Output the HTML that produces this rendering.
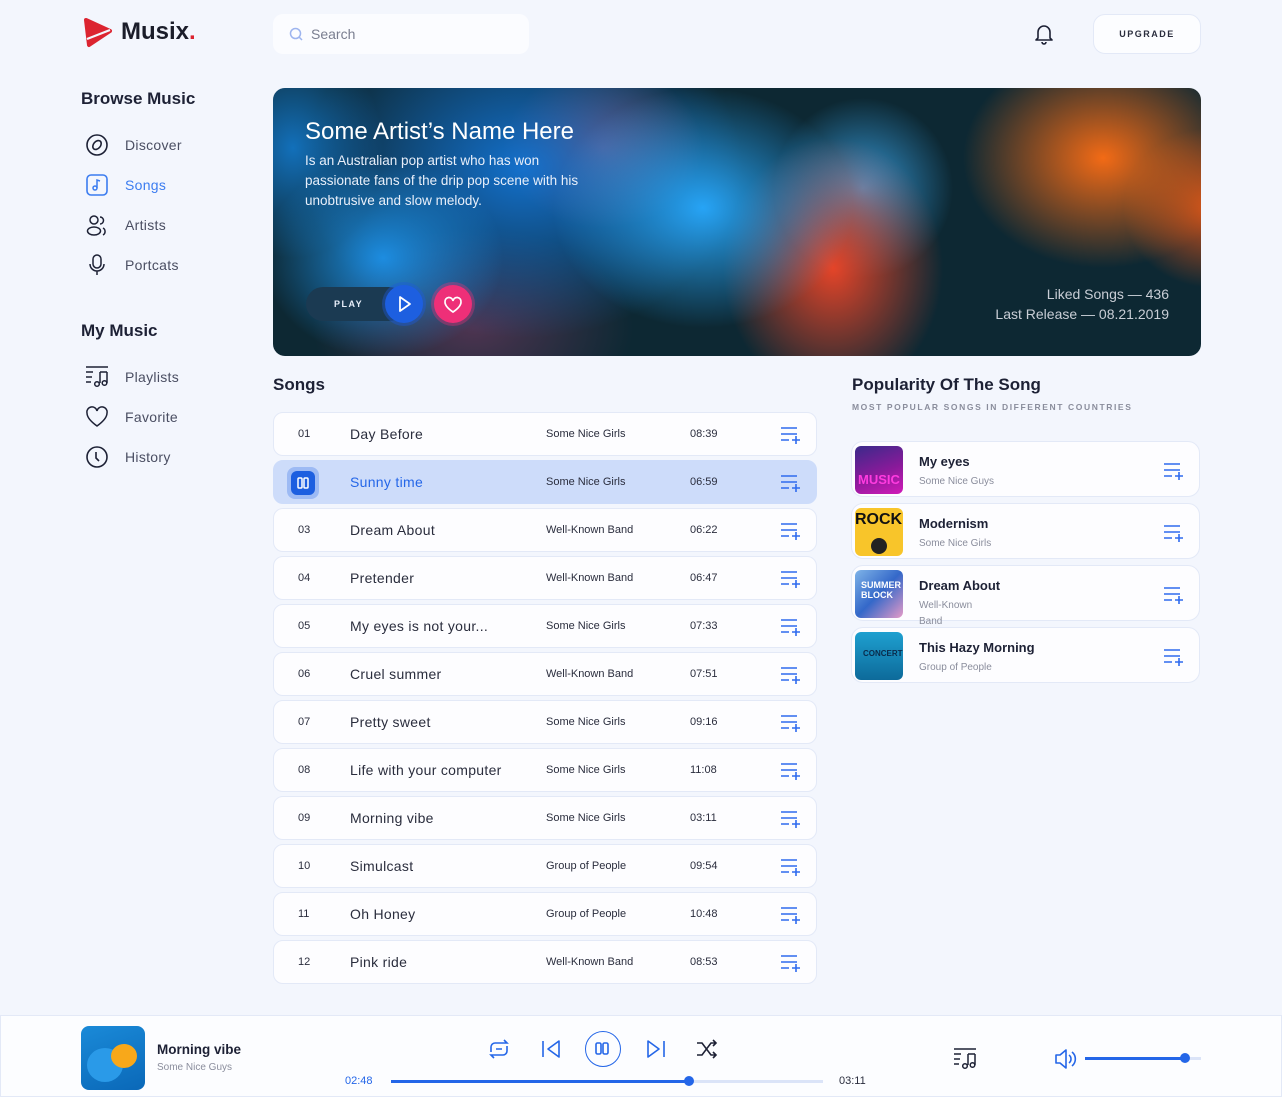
<!DOCTYPE html>
<html><head><meta charset="utf-8"><style>
*{margin:0;padding:0;box-sizing:border-box}
body{width:1282px;height:1097px;background:#f3f6fd;font-family:"Liberation Sans",sans-serif;color:#1d2135;position:relative;overflow:hidden}
.a{position:absolute}
.nav{position:absolute;left:86px;display:flex;align-items:center;font-size:14px;color:#4a4e62;letter-spacing:.3px}
.nav svg{width:22px;height:22px;margin-right:17px}
.row{position:absolute;left:273px;width:544px;height:44px;background:#fdfdff;border:1px solid #e3e9f7;border-radius:10px;font-size:11px;color:#2a2d3d}
.row span{position:absolute;top:15px}
.row .n{left:24px}
.row .t{left:76px;font-size:14px;top:13px;letter-spacing:.3px}
.row .b{left:272px}
.row .d{left:416px}
.row .ad{position:absolute;left:506px;top:12px}
.card{position:absolute;left:851px;width:349px;height:56px;background:#fdfdff;border:1px solid #e3e9f7;border-radius:12px}
.card .im{position:absolute;left:3px;top:4px;width:48px;height:48px;border-radius:6px;overflow:hidden}
.card b{position:absolute;left:67px;top:12px;font-size:13px}
.card i{position:absolute;left:67px;top:32px;font-style:normal;font-size:10px;color:#8a8d9c;line-height:16px}
.card svg{position:absolute;left:311px;top:19px}
</style></head><body>
<svg class="a" style="left:82px;top:16px" width="32" height="32" viewBox="0 0 32 32"><path d="M4 4 L28 15 L7 29 Z" fill="#dc2430" stroke="#dc2430" stroke-width="4" stroke-linejoin="round"/><path d="M5 23 L28 14" stroke="#f3f6fd" stroke-width="2.2"/></svg>
<div class="a" style="left:121px;top:18px;font-size:24px;font-weight:bold;color:#1b1d2a">Musix<span style="color:#dc2430">.</span></div>
<div class="a" style="left:273px;top:14px;width:256px;height:40px;background:#fbfcff;border-radius:10px"></div>
<svg class="a" style="left:289px;top:27px" width="14" height="14"><circle cx="6.5" cy="6.5" r="5" fill="none" stroke="#9db4ef" stroke-width="1.5"/><path d="M10 10l3 3" stroke="#9db4ef" stroke-width="1.5"/></svg>
<div class="a" style="left:311px;top:26px;font-size:14px;color:#7a7e90">Search</div>
<svg class="a" style="left:1034px;top:23px" width="20" height="22" viewBox="0 0 20 22"><path d="M4 15V9a6 6 0 0 1 12 0v6l2 2H2z M8 19a2 2 0 0 0 4 0" fill="none" stroke="#1d2135" stroke-width="1.6" stroke-linejoin="round"/></svg>
<div class="a" style="left:1093px;top:14px;width:108px;height:40px;background:#fcfdff;border:1px solid #e3e9f7;border-radius:12px;font-size:9px;font-weight:bold;letter-spacing:1.5px;text-align:center;line-height:38px;color:#2a2d3d">UPGRADE</div>

<div class="a" style="left:81px;top:89px;font-size:17px;font-weight:bold">Browse Music</div>
<div class="nav" style="top:134px"><svg viewBox="0 0 22 22"><circle cx="11" cy="11" r="10" fill="none" stroke="#1d2135" stroke-width="1.6"/><ellipse cx="11" cy="11" rx="3.5" ry="5" transform="rotate(40 11 11)" fill="none" stroke="#1d2135" stroke-width="1.6"/></svg>Discover</div>
<div class="nav" style="top:174px;color:#3b7cf0"><svg viewBox="0 0 22 22"><rect x="1" y="1" width="20" height="20" rx="4" fill="none" stroke="#3b7cf0" stroke-width="1.6"/><circle cx="9" cy="14" r="2" fill="none" stroke="#3b7cf0" stroke-width="1.5"/><path d="M11 14V6l3 1" fill="none" stroke="#3b7cf0" stroke-width="1.5"/></svg>Songs</div>
<div class="nav" style="top:214px"><svg viewBox="0 0 22 22"><circle cx="8" cy="6" r="4" fill="none" stroke="#1d2135" stroke-width="1.5"/><ellipse cx="8" cy="17" rx="6.5" ry="4" fill="none" stroke="#1d2135" stroke-width="1.5"/><path d="M14 3a3.5 3.5 0 0 1 0 7M17 14a4 4 0 0 1 0 7" fill="none" stroke="#1d2135" stroke-width="1.5"/></svg>Artists</div>
<div class="nav" style="top:254px"><svg viewBox="0 0 22 22"><rect x="7" y="1" width="8" height="13" rx="4" fill="none" stroke="#1d2135" stroke-width="1.5"/><path d="M4 10a7 7 0 0 0 14 0M11 17v4" fill="none" stroke="#1d2135" stroke-width="1.5"/></svg>Portcats</div>
<div class="a" style="left:81px;top:321px;font-size:17px;font-weight:bold">My Music</div>
<div class="nav" style="top:366px"><svg viewBox="0 0 22 22"><path d="M0 1h22M0 6h7M0 11h6M0 16h5M14 6h7M14 6v11M21 6v11" fill="none" stroke="#1d2135" stroke-width="1.5"/><circle cx="11" cy="18" r="2.3" fill="none" stroke="#1d2135" stroke-width="1.5"/><circle cx="18.5" cy="17" r="2.3" fill="none" stroke="#1d2135" stroke-width="1.5"/></svg>Playlists</div>
<div class="nav" style="top:406px"><svg viewBox="0 0 22 22"><path d="M11 20C4 15 1 11 1 7a5 5 0 0 1 10-2a5 5 0 0 1 10 2c0 4-3 8-10 13z" fill="none" stroke="#1d2135" stroke-width="1.5"/></svg>Favorite</div>
<div class="nav" style="top:446px"><svg viewBox="0 0 22 22"><circle cx="11" cy="11" r="10" fill="none" stroke="#1d2135" stroke-width="1.6"/><path d="M10 6v6l3 3" fill="none" stroke="#1d2135" stroke-width="1.6"/></svg>History</div>

<div class="a" style="left:273px;top:88px;width:928px;height:268px;border-radius:12px;overflow:hidden;background:#0d2833">
<div class="a" style="left:0;top:0;width:928px;height:268px;background:
radial-gradient(ellipse 150px 120px at 430px 120px,rgba(40,170,255,.95),transparent),
radial-gradient(ellipse 120px 100px at 110px 170px,rgba(30,150,240,.9),transparent),
radial-gradient(ellipse 110px 130px at 560px 180px,rgba(240,70,40,.95),transparent),
radial-gradient(ellipse 90px 90px at 590px 100px,rgba(60,170,240,.85),transparent),
radial-gradient(ellipse 140px 110px at 830px 70px,rgba(255,110,20,.95),transparent),
radial-gradient(ellipse 90px 80px at 940px 120px,rgba(250,90,20,.85),transparent),
radial-gradient(ellipse 220px 170px at 250px 80px,rgba(20,120,220,.9),transparent),
radial-gradient(ellipse 100px 80px at 330px 60px,rgba(230,80,90,.6),transparent),
radial-gradient(ellipse 90px 110px at 20px 60px,rgba(20,130,220,.8),transparent),
radial-gradient(ellipse 160px 100px at 200px 240px,rgba(120,60,100,.6),transparent)"></div>
<div class="a" style="left:32px;top:30px;font-size:24px;color:#fff">Some Artist’s Name Here</div>
<div class="a" style="left:32px;top:63px;font-size:13.5px;color:#e8effa;line-height:20px;width:275px">Is an Australian pop artist who has won passionate fans of the drip pop scene with his unobtrusive and slow melody.</div>
<div class="a" style="left:33px;top:199px;width:100px;height:34px;border-radius:17px;background:#1b3a52;font-size:9px;font-weight:bold;letter-spacing:1.5px;color:#e8effa;line-height:34px;padding-left:28px">PLAY</div>
<div class="a" style="left:112px;top:197px;width:38px;height:38px;border-radius:50%;background:#1d5fe0;box-shadow:0 0 0 3px rgba(30,90,220,.4)"><svg width="38" height="38"><path d="M15 12l10 7-10 7z" fill="none" stroke="#fff" stroke-width="1.8" stroke-linejoin="round"/></svg></div>
<div class="a" style="left:161px;top:197px;width:38px;height:38px;border-radius:50%;background:#ee2f78;box-shadow:0 0 0 3px rgba(240,50,120,.35)"><svg width="38" height="38"><path d="M19 27c-6-4-8-7-8-10a4 4 0 0 1 8-1a4 4 0 0 1 8 1c0 3-2 6-8 10z" fill="none" stroke="#fff" stroke-width="1.7"/></svg></div>
<div class="a" style="right:32px;top:196px;font-size:14px;color:#c9ced6;text-align:right;line-height:20px">Liked Songs — 436<br>Last Release — 08.21.2019</div>
</div>

<div class="a" style="left:273px;top:375px;font-size:17px;font-weight:bold">Songs</div>
<div class="row" style="top:412px"><span class="n">01</span><span class="t">Day Before</span><span class="b">Some Nice Girls</span><span class="d">08:39</span><svg class="ad" width="20" height="20"><path d="M1 3h16M1 9h16M1 15h8M12 15h8M16 11v8" stroke="#2f6bee" stroke-width="1.6"/></svg></div>
<div class="row" style="top:460px;background:#cddcfa;border-color:#cddcfa"><div class="a" style="left:13px;top:6px;width:32px;height:32px;border-radius:8px;background:#9dbaf4"><div class="a" style="left:4px;top:4px;width:24px;height:24px;border-radius:6px;background:#1d5fe0"><svg width="24" height="24"><rect x="7" y="7" width="4" height="10" rx="1" fill="none" stroke="#fff" stroke-width="1.5"/><rect x="13" y="7" width="4" height="10" rx="1" fill="none" stroke="#fff" stroke-width="1.5"/></svg></div></div><span class="t" style="color:#2466e8">Sunny time</span><span class="b">Some Nice Girls</span><span class="d">06:59</span><svg class="ad" width="20" height="20"><path d="M1 3h16M1 9h16M1 15h8M12 15h8M16 11v8" stroke="#2f6bee" stroke-width="1.6"/></svg></div>
<div class="row" style="top:508px"><span class="n">03</span><span class="t">Dream About</span><span class="b">Well-Known Band</span><span class="d">06:22</span><svg class="ad" width="20" height="20"><path d="M1 3h16M1 9h16M1 15h8M12 15h8M16 11v8" stroke="#2f6bee" stroke-width="1.6"/></svg></div>
<div class="row" style="top:556px"><span class="n">04</span><span class="t">Pretender</span><span class="b">Well-Known Band</span><span class="d">06:47</span><svg class="ad" width="20" height="20"><path d="M1 3h16M1 9h16M1 15h8M12 15h8M16 11v8" stroke="#2f6bee" stroke-width="1.6"/></svg></div>
<div class="row" style="top:604px"><span class="n">05</span><span class="t">My eyes is not your...</span><span class="b">Some Nice Girls</span><span class="d">07:33</span><svg class="ad" width="20" height="20"><path d="M1 3h16M1 9h16M1 15h8M12 15h8M16 11v8" stroke="#2f6bee" stroke-width="1.6"/></svg></div>
<div class="row" style="top:652px"><span class="n">06</span><span class="t">Cruel summer</span><span class="b">Well-Known Band</span><span class="d">07:51</span><svg class="ad" width="20" height="20"><path d="M1 3h16M1 9h16M1 15h8M12 15h8M16 11v8" stroke="#2f6bee" stroke-width="1.6"/></svg></div>
<div class="row" style="top:700px"><span class="n">07</span><span class="t">Pretty sweet</span><span class="b">Some Nice Girls</span><span class="d">09:16</span><svg class="ad" width="20" height="20"><path d="M1 3h16M1 9h16M1 15h8M12 15h8M16 11v8" stroke="#2f6bee" stroke-width="1.6"/></svg></div>
<div class="row" style="top:748px"><span class="n">08</span><span class="t">Life with your computer</span><span class="b">Some Nice Girls</span><span class="d">11:08</span><svg class="ad" width="20" height="20"><path d="M1 3h16M1 9h16M1 15h8M12 15h8M16 11v8" stroke="#2f6bee" stroke-width="1.6"/></svg></div>
<div class="row" style="top:796px"><span class="n">09</span><span class="t">Morning vibe</span><span class="b">Some Nice Girls</span><span class="d">03:11</span><svg class="ad" width="20" height="20"><path d="M1 3h16M1 9h16M1 15h8M12 15h8M16 11v8" stroke="#2f6bee" stroke-width="1.6"/></svg></div>
<div class="row" style="top:844px"><span class="n">10</span><span class="t">Simulcast</span><span class="b">Group of People</span><span class="d">09:54</span><svg class="ad" width="20" height="20"><path d="M1 3h16M1 9h16M1 15h8M12 15h8M16 11v8" stroke="#2f6bee" stroke-width="1.6"/></svg></div>
<div class="row" style="top:892px"><span class="n">11</span><span class="t">Oh Honey</span><span class="b">Group of People</span><span class="d">10:48</span><svg class="ad" width="20" height="20"><path d="M1 3h16M1 9h16M1 15h8M12 15h8M16 11v8" stroke="#2f6bee" stroke-width="1.6"/></svg></div>
<div class="row" style="top:940px"><span class="n">12</span><span class="t">Pink ride</span><span class="b">Well-Known Band</span><span class="d">08:53</span><svg class="ad" width="20" height="20"><path d="M1 3h16M1 9h16M1 15h8M12 15h8M16 11v8" stroke="#2f6bee" stroke-width="1.6"/></svg></div>

<div class="a" style="left:852px;top:375px;font-size:17px;font-weight:bold">Popularity Of The Song</div>
<div class="a" style="left:852px;top:402px;font-size:8.5px;font-weight:bold;letter-spacing:1.6px;color:#8a8d9c">MOST POPULAR SONGS IN DIFFERENT COUNTRIES</div>
<div class="card" style="top:441px"><div class="im" style="background:linear-gradient(160deg,#3a2a8a,#8a1a9a 55%,#d21ab8)"><div class="a" style="left:3px;top:26px;font-size:13px;font-weight:bold;color:#ff3be0">MUSIC</div></div><b>My eyes</b><i>Some Nice Guys</i><svg width="20" height="20"><path d="M1 3h16M1 9h16M1 15h8M12 15h8M16 11v8" stroke="#2f6bee" stroke-width="1.6"/></svg></div>
<div class="card" style="top:503px"><div class="im" style="background:#f8c52a"><div class="a" style="left:0;top:3px;font-size:16px;font-weight:bold;color:#111">ROCK</div><div class="a" style="left:16px;top:30px;width:16px;height:16px;border-radius:50%;background:#222"></div></div><b>Modernism</b><i>Some Nice Girls</i><svg width="20" height="20"><path d="M1 3h16M1 9h16M1 15h8M12 15h8M16 11v8" stroke="#2f6bee" stroke-width="1.6"/></svg></div>
<div class="card" style="top:565px"><div class="im" style="background:linear-gradient(135deg,#7fb4e8,#3468c9 50%,#e59ac8)"><div class="a" style="left:6px;top:10px;font-size:9px;font-weight:bold;color:#fff;line-height:10px">SUMMER<br>BLOCK</div></div><b>Dream About</b><i>Well-Known<br>Band</i><svg width="20" height="20"><path d="M1 3h16M1 9h16M1 15h8M12 15h8M16 11v8" stroke="#2f6bee" stroke-width="1.6"/></svg></div>
<div class="card" style="top:627px"><div class="im" style="background:linear-gradient(180deg,#1ea0d0,#0d6a9a)"><div class="a" style="left:8px;top:17px;font-size:8px;font-weight:bold;color:#0a2a4a">CONCERT</div></div><b>This Hazy Morning</b><i>Group of People</i><svg width="20" height="20"><path d="M1 3h16M1 9h16M1 15h8M12 15h8M16 11v8" stroke="#2f6bee" stroke-width="1.6"/></svg></div>

<div class="a" style="left:0;top:1015px;width:1282px;height:82px;background:#fcfdff;border:1px solid #e3e9f7"></div>
<div class="a" style="left:81px;top:1026px;width:64px;height:64px;border-radius:8px;background:linear-gradient(160deg,#1a8ad8,#0a68b8);overflow:hidden"><div class="a" style="left:6px;top:22px;width:36px;height:34px;border-radius:50%;background:#2a9ae8"></div><div class="a" style="left:30px;top:18px;width:26px;height:24px;border-radius:50%;background:#f8a81a"></div></div>
<div class="a" style="left:157px;top:1042px;font-size:13.5px;font-weight:bold">Morning vibe</div>
<div class="a" style="left:157px;top:1062px;font-size:10px;color:#8a8d9c">Some Nice Guys</div>
<svg class="a" style="left:486px;top:1037px" width="26" height="24" viewBox="0 0 26 24"><path d="M5 15V10a4 4 0 0 1 4-4h12l-3-3M21 9v5a4 4 0 0 1-4 4H5l3 3M10 12h6" fill="none" stroke="#2466e8" stroke-width="1.6"/></svg>
<svg class="a" style="left:540px;top:1039px" width="22" height="20"><path d="M3 2v16M19 2L8 10l11 8z" fill="none" stroke="#2466e8" stroke-width="1.6" stroke-linejoin="round"/></svg>
<div class="a" style="left:585px;top:1031px;width:36px;height:36px;border-radius:50%;border:1.8px solid #2466e8"><svg width="33" height="33"><rect x="10" y="11" width="5" height="11" rx="1.5" fill="none" stroke="#2466e8" stroke-width="1.6"/><rect x="17" y="11" width="5" height="11" rx="1.5" fill="none" stroke="#2466e8" stroke-width="1.6"/></svg></div>
<svg class="a" style="left:645px;top:1039px" width="22" height="20"><path d="M19 2v16M3 2l11 8-11 8z" fill="none" stroke="#2466e8" stroke-width="1.6" stroke-linejoin="round"/></svg>
<svg class="a" style="left:696px;top:1039px" width="22" height="20"><path d="M1 4h5l9 12h5M1 16h5l9-12h5M17 1l3 3-3 3M17 13l3 3-3 3" fill="none" stroke="#1d2135" stroke-width="1.6"/></svg>
<div class="a" style="left:345px;top:1075px;font-size:11px;color:#2466e8">02:48</div>
<div class="a" style="left:391px;top:1080px;width:432px;height:3px;background:#dbe4f8"></div>
<div class="a" style="left:391px;top:1080px;width:298px;height:3px;background:#2466e8"></div>
<div class="a" style="left:684px;top:1076px;width:10px;height:10px;border-radius:50%;background:#2466e8"></div>
<div class="a" style="left:839px;top:1075px;font-size:11px;color:#2a2d3d">03:11</div>
<svg class="a" style="left:954px;top:1048px" width="22" height="22" viewBox="0 0 22 22"><path d="M0 1h22M0 6h7M0 11h6M0 16h5M14 6h7M14 6v11M21 6v11" fill="none" stroke="#1d2135" stroke-width="1.5"/><circle cx="11" cy="18" r="2.3" fill="none" stroke="#1d2135" stroke-width="1.5"/><circle cx="18.5" cy="17" r="2.3" fill="none" stroke="#1d2135" stroke-width="1.5"/></svg>
<svg class="a" style="left:1054px;top:1048px" width="24" height="22"><path d="M2 7h4l6-5v18l-6-5H2z M15 7a5 5 0 0 1 0 8M18 4a9 9 0 0 1 0 14" fill="none" stroke="#2466e8" stroke-width="1.6" stroke-linejoin="round"/></svg>
<div class="a" style="left:1085px;top:1057px;width:116px;height:3px;background:#dbe4f8"></div>
<div class="a" style="left:1085px;top:1057px;width:100px;height:3px;background:#2466e8"></div>
<div class="a" style="left:1180px;top:1053px;width:10px;height:10px;border-radius:50%;background:#2466e8"></div>
</body></html>
